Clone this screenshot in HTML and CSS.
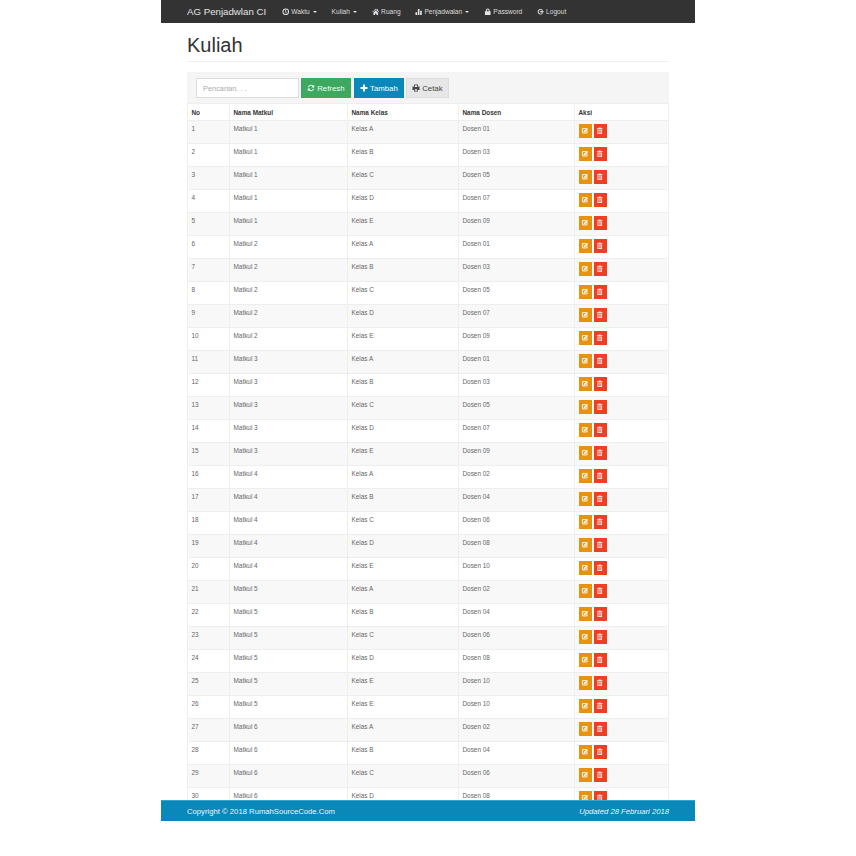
FILE: index.html
```html
<!DOCTYPE html>
<html lang="id">
<head>
<meta charset="utf-8">
<title>Kuliah</title>
<link rel="stylesheet" href="styles.css">
</head>
<body>
<svg class="defs" width="0" height="0" aria-hidden="true">
  <symbol id="i-edit" viewBox="0 0 16 16"><path fill-rule="evenodd" d="M4 2h7.500L9.500 4.500H5a.5.5 0 0 0-.5.5v6a.5.5 0 0 0 .5.5h6a.5.5 0 0 0 .5-.5V8.500L14 6.500V11a3 3 0 0 1-3 3H5a3 3 0 0 1-3-3V4a2 2 0 0 1 2-2zM12.500 1.500L15 4l-6 6.500-3.500 1 1-3.500z"/></symbol>
  <symbol id="i-trash" viewBox="0 0 16 16"><path fill-rule="evenodd" d="M6 1h4l.6 1.500H14V4.500H2V2.500h3.400zM3 5.500h10V15H3zM5.200 7v6.500h1.200V7zM7.400 7v6.500h1.200V7zM9.600 7v6.500h1.200V7z"/></symbol>
  <symbol id="i-clock" viewBox="0 0 16 16"><path fill-rule="evenodd" d="M8 1a7 7 0 1 1 0 14A7 7 0 0 1 8 1zm0 2a5 5 0 1 0 0 10A5 5 0 0 0 8 3zM7 4.500h1.500V8H11v1.500H7z"/></symbol>
  <symbol id="i-home" viewBox="0 0 16 16"><path d="M8 1.500l3 2.700V2.500h2v3.500l2.500 2.300-1 1L8 3.500 1.500 9.300l-1-1zM3 10l5-4.500 5 4.500v5H9.500v-3.500h-3V15H3z"/></symbol>
  <symbol id="i-stats" viewBox="0 0 16 16"><path d="M1 9h3.500v6H1zM6 2h3.500v13H6zM11 6h3.500v9H11z"/></symbol>
  <symbol id="i-lock" viewBox="0 0 16 16"><path fill-rule="evenodd" d="M2 7h2V5a4 4 0 0 1 8 0v2h2v8H2zM6 7h4V5a2 2 0 0 0-4 0z"/></symbol>
  <symbol id="i-logout" viewBox="0 0 16 16"><path d="M7.500 2a6 6 0 0 1 5.200 3h-2.500a4 4 0 1 0 0 6h2.500a6 6 0 1 1-5.200-9zM10 5l5 3-5 3V9H6V7h4z"/></symbol>
  <symbol id="i-refresh" viewBox="0 0 16 16"><path d="M8 1.500a6.500 6.500 0 0 1 4.600 1.900L14.500 1.500V7H9l2.100-2.100A4.300 4.300 0 0 0 3.900 6.500H1.700A6.500 6.500 0 0 1 8 1.500zM1.500 9H7l-2.100 2.100a4.300 4.300 0 0 0 7.200-1.600h2.200a6.500 6.500 0 0 1-10.900 3.100L1.500 14.500z"/></symbol>
  <symbol id="i-plus" viewBox="0 0 16 16"><path d="M6 1h4v5h5v4h-5v5H6v-5H1V6h5z"/></symbol>
  <symbol id="i-print" viewBox="0 0 16 16"><path fill-rule="evenodd" d="M4 1h8v4h3v7h-3v3H4v-3H1V5h3zm1.500 1.500V6h5V2.500zm0 8V13.500h5v-3z"/></symbol>
</svg>
<div class="page">
  <nav class="navbar">
    <a class="brand">AG Penjadwlan CI</a>
    <ul class="menu">
      <li><svg class="ico"><use href="#i-clock"/></svg> Waktu <span class="caret"></span></li>
      <li>Kuliah <span class="caret"></span></li>
      <li><svg class="ico"><use href="#i-home"/></svg> Ruang</li>
      <li><svg class="ico"><use href="#i-stats"/></svg> Penjadwalan <span class="caret"></span></li>
      <li><svg class="ico"><use href="#i-lock"/></svg> Password</li>
      <li><svg class="ico"><use href="#i-logout"/></svg> Logout</li>
    </ul>
  </nav>
  <main class="content">
    <h1 class="title">Kuliah</h1>
    <section class="panel">
      <div class="toolbar">
        <input class="search" type="text" placeholder="Pencarian. . .">
        <button class="btn btn-green"><svg class="ico-btn"><use href="#i-refresh"/></svg> Refresh</button>
        <button class="btn btn-blue"><svg class="ico-btn"><use href="#i-plus"/></svg> Tambah</button>
        <button class="btn btn-grey"><svg class="ico-btn"><use href="#i-print"/></svg> Cetak</button>
      </div>
      <table class="grid">
        <colgroup><col class="c1"><col class="c2"><col class="c3"><col class="c4"><col class="c5"></colgroup>
        <thead><tr><th>No</th><th>Nama Matkul</th><th>Nama Kelas</th><th>Nama Dosen</th><th>Aksi</th></tr></thead>
        <tbody>
          <tr><td>1</td><td>Matkul 1</td><td>Kelas A</td><td>Dosen 01</td><td class="aksi"><a class="act act-e"><svg><use href="#i-edit"/></svg></a><a class="act act-d"><svg><use href="#i-trash"/></svg></a></td></tr>
          <tr><td>2</td><td>Matkul 1</td><td>Kelas B</td><td>Dosen 03</td><td class="aksi"><a class="act act-e"><svg><use href="#i-edit"/></svg></a><a class="act act-d"><svg><use href="#i-trash"/></svg></a></td></tr>
          <tr><td>3</td><td>Matkul 1</td><td>Kelas C</td><td>Dosen 05</td><td class="aksi"><a class="act act-e"><svg><use href="#i-edit"/></svg></a><a class="act act-d"><svg><use href="#i-trash"/></svg></a></td></tr>
          <tr><td>4</td><td>Matkul 1</td><td>Kelas D</td><td>Dosen 07</td><td class="aksi"><a class="act act-e"><svg><use href="#i-edit"/></svg></a><a class="act act-d"><svg><use href="#i-trash"/></svg></a></td></tr>
          <tr><td>5</td><td>Matkul 1</td><td>Kelas E</td><td>Dosen 09</td><td class="aksi"><a class="act act-e"><svg><use href="#i-edit"/></svg></a><a class="act act-d"><svg><use href="#i-trash"/></svg></a></td></tr>
          <tr><td>6</td><td>Matkul 2</td><td>Kelas A</td><td>Dosen 01</td><td class="aksi"><a class="act act-e"><svg><use href="#i-edit"/></svg></a><a class="act act-d"><svg><use href="#i-trash"/></svg></a></td></tr>
          <tr><td>7</td><td>Matkul 2</td><td>Kelas B</td><td>Dosen 03</td><td class="aksi"><a class="act act-e"><svg><use href="#i-edit"/></svg></a><a class="act act-d"><svg><use href="#i-trash"/></svg></a></td></tr>
          <tr><td>8</td><td>Matkul 2</td><td>Kelas C</td><td>Dosen 05</td><td class="aksi"><a class="act act-e"><svg><use href="#i-edit"/></svg></a><a class="act act-d"><svg><use href="#i-trash"/></svg></a></td></tr>
          <tr><td>9</td><td>Matkul 2</td><td>Kelas D</td><td>Dosen 07</td><td class="aksi"><a class="act act-e"><svg><use href="#i-edit"/></svg></a><a class="act act-d"><svg><use href="#i-trash"/></svg></a></td></tr>
          <tr><td>10</td><td>Matkul 2</td><td>Kelas E</td><td>Dosen 09</td><td class="aksi"><a class="act act-e"><svg><use href="#i-edit"/></svg></a><a class="act act-d"><svg><use href="#i-trash"/></svg></a></td></tr>
          <tr><td>11</td><td>Matkul 3</td><td>Kelas A</td><td>Dosen 01</td><td class="aksi"><a class="act act-e"><svg><use href="#i-edit"/></svg></a><a class="act act-d"><svg><use href="#i-trash"/></svg></a></td></tr>
          <tr><td>12</td><td>Matkul 3</td><td>Kelas B</td><td>Dosen 03</td><td class="aksi"><a class="act act-e"><svg><use href="#i-edit"/></svg></a><a class="act act-d"><svg><use href="#i-trash"/></svg></a></td></tr>
          <tr><td>13</td><td>Matkul 3</td><td>Kelas C</td><td>Dosen 05</td><td class="aksi"><a class="act act-e"><svg><use href="#i-edit"/></svg></a><a class="act act-d"><svg><use href="#i-trash"/></svg></a></td></tr>
          <tr><td>14</td><td>Matkul 3</td><td>Kelas D</td><td>Dosen 07</td><td class="aksi"><a class="act act-e"><svg><use href="#i-edit"/></svg></a><a class="act act-d"><svg><use href="#i-trash"/></svg></a></td></tr>
          <tr><td>15</td><td>Matkul 3</td><td>Kelas E</td><td>Dosen 09</td><td class="aksi"><a class="act act-e"><svg><use href="#i-edit"/></svg></a><a class="act act-d"><svg><use href="#i-trash"/></svg></a></td></tr>
          <tr><td>16</td><td>Matkul 4</td><td>Kelas A</td><td>Dosen 02</td><td class="aksi"><a class="act act-e"><svg><use href="#i-edit"/></svg></a><a class="act act-d"><svg><use href="#i-trash"/></svg></a></td></tr>
          <tr><td>17</td><td>Matkul 4</td><td>Kelas B</td><td>Dosen 04</td><td class="aksi"><a class="act act-e"><svg><use href="#i-edit"/></svg></a><a class="act act-d"><svg><use href="#i-trash"/></svg></a></td></tr>
          <tr><td>18</td><td>Matkul 4</td><td>Kelas C</td><td>Dosen 06</td><td class="aksi"><a class="act act-e"><svg><use href="#i-edit"/></svg></a><a class="act act-d"><svg><use href="#i-trash"/></svg></a></td></tr>
          <tr><td>19</td><td>Matkul 4</td><td>Kelas D</td><td>Dosen 08</td><td class="aksi"><a class="act act-e"><svg><use href="#i-edit"/></svg></a><a class="act act-d"><svg><use href="#i-trash"/></svg></a></td></tr>
          <tr><td>20</td><td>Matkul 4</td><td>Kelas E</td><td>Dosen 10</td><td class="aksi"><a class="act act-e"><svg><use href="#i-edit"/></svg></a><a class="act act-d"><svg><use href="#i-trash"/></svg></a></td></tr>
          <tr><td>21</td><td>Matkul 5</td><td>Kelas A</td><td>Dosen 02</td><td class="aksi"><a class="act act-e"><svg><use href="#i-edit"/></svg></a><a class="act act-d"><svg><use href="#i-trash"/></svg></a></td></tr>
          <tr><td>22</td><td>Matkul 5</td><td>Kelas B</td><td>Dosen 04</td><td class="aksi"><a class="act act-e"><svg><use href="#i-edit"/></svg></a><a class="act act-d"><svg><use href="#i-trash"/></svg></a></td></tr>
          <tr><td>23</td><td>Matkul 5</td><td>Kelas C</td><td>Dosen 06</td><td class="aksi"><a class="act act-e"><svg><use href="#i-edit"/></svg></a><a class="act act-d"><svg><use href="#i-trash"/></svg></a></td></tr>
          <tr><td>24</td><td>Matkul 5</td><td>Kelas D</td><td>Dosen 08</td><td class="aksi"><a class="act act-e"><svg><use href="#i-edit"/></svg></a><a class="act act-d"><svg><use href="#i-trash"/></svg></a></td></tr>
          <tr><td>25</td><td>Matkul 5</td><td>Kelas E</td><td>Dosen 10</td><td class="aksi"><a class="act act-e"><svg><use href="#i-edit"/></svg></a><a class="act act-d"><svg><use href="#i-trash"/></svg></a></td></tr>
          <tr><td>26</td><td>Matkul 5</td><td>Kelas E</td><td>Dosen 10</td><td class="aksi"><a class="act act-e"><svg><use href="#i-edit"/></svg></a><a class="act act-d"><svg><use href="#i-trash"/></svg></a></td></tr>
          <tr><td>27</td><td>Matkul 6</td><td>Kelas A</td><td>Dosen 02</td><td class="aksi"><a class="act act-e"><svg><use href="#i-edit"/></svg></a><a class="act act-d"><svg><use href="#i-trash"/></svg></a></td></tr>
          <tr><td>28</td><td>Matkul 6</td><td>Kelas B</td><td>Dosen 04</td><td class="aksi"><a class="act act-e"><svg><use href="#i-edit"/></svg></a><a class="act act-d"><svg><use href="#i-trash"/></svg></a></td></tr>
          <tr><td>29</td><td>Matkul 6</td><td>Kelas C</td><td>Dosen 06</td><td class="aksi"><a class="act act-e"><svg><use href="#i-edit"/></svg></a><a class="act act-d"><svg><use href="#i-trash"/></svg></a></td></tr>
          <tr><td>30</td><td>Matkul 6</td><td>Kelas D</td><td>Dosen 08</td><td class="aksi"><a class="act act-e"><svg><use href="#i-edit"/></svg></a><a class="act act-d"><svg><use href="#i-trash"/></svg></a></td></tr>
        </tbody>
      </table>
    </section>
  </main>
  <footer class="footer">
    <span>Copyright © 2018 RumahSourceCode.Com</span>
    <em>Updated 28 Februari 2018</em>
  </footer>
</div>
</body>
</html>
```
FILE: styles.css
```css
* { box-sizing: border-box; }
html, body { margin: 0; padding: 0; background: #fff; }
body { font-family: "Liberation Sans", Arial, sans-serif; color: #333; }
.defs { position: absolute; }
.page {
  width: 534px;
  height: 821px;
  margin-left: 161px;
  display: flex;
  flex-direction: column;
}
.navbar {
  flex: none;
  height: 23px;
  background: #333;
  color: #ddd;
  display: flex;
  align-items: center;
  padding-left: 26px;
}
.brand { font-size: 9.7px; color: #e4e4e4; width: 95px; }
.menu {
  list-style: none;
  margin: 0;
  padding: 0;
  display: flex;
  font-size: 6.6px;
  gap: 14.5px;
}
.menu li { display: flex; align-items: center; white-space: pre; }
.ico { width: 7.5px; height: 7.5px; fill: #e4e4e4; flex: none; }
.caret {
  display: inline-block;
  margin-left: 1.5px;
  border-top: 2px solid #ddd;
  border-left: 2px solid transparent;
  border-right: 2px solid transparent;
}
.content {
  flex: 1;
  min-height: 0;
  overflow: hidden;
  padding: 0 26px;
}
.title {
  margin: 11px 0 0;
  padding-bottom: 5px;
  height: 28px;
  font-size: 20px;
  line-height: 23px;
  font-weight: 400;
  color: #333;
  border-bottom: 1px solid #eee;
}
.panel { margin-top: 10px; }
.toolbar {
  height: 31px;
  background: #f5f5f5;
  padding: 6px 9px 5px;
  display: flex;
  gap: 2px;
}
.search {
  width: 103px;
  height: 20px;
  border: 1px solid #ddd;
  background: #fff;
  padding: 0 6px;
  font: 7.4px "Liberation Sans", Arial, sans-serif;
  outline: none;
}
.search::placeholder { color: #aaa; }
.btn {
  flex: none;
  height: 20px;
  padding: 0 0 0 5px;
  border: 1px solid transparent;
  font: 7.8px "Liberation Sans", Arial, sans-serif;
  display: flex;
  align-items: center;
  white-space: pre;
}
.ico-btn { width: 8px; height: 8px; fill: currentColor; flex: none; }
.btn-green { background: #3da85f; width: 50px; color: #f2fff6; }
.btn-blue { background: #0a88ba; color: #fff; width: 50px; margin-left: 1px; }
.btn-grey { background: #e7e7e7; color: #444; border-color: #ddd; width: 43px; }
.grid {
  width: 100%;
  border-collapse: collapse;
  table-layout: fixed;
  font-size: 6.4px;
}
.c1 { width: 42px; }
.c2 { width: 118px; }
.c3 { width: 111px; }
.c4 { width: 116px; }
.grid th, .grid td {
  border: 1px solid #eee;
  text-align: left;
  vertical-align: top;
  padding: 0 3.5px;
}
.grid th {
  height: 17px;
  vertical-align: middle;
  font-weight: 700;
  color: #333;
}
.grid td { height: 23px; padding-top: 3.5px; color: #666; }
.grid tbody tr:nth-child(odd) { background: #f8f8f8; }
.grid td.aksi { padding-top: 0; vertical-align: top; }
.aksi { line-height: 0; }
.act {
  display: inline-flex;
  align-items: center;
  justify-content: center;
  width: 13px;
  height: 14px;
  margin-right: 2px;
  margin-top: 3px;
}
.act svg { width: 7.5px; height: 7.5px; fill: #fff; opacity: .85; }
.act-e { background: #e8930f; }
.act-d { background: #ee3f24; }
.footer {
  flex: none;
  height: 21px;
  background: #0a88ba;
  border-top: 1px solid #35a5cf;
  color: #eaf6fb;
  font-size: 7.7px;
  display: flex;
  align-items: center;
  justify-content: space-between;
  padding: 0 26px;
}
```
